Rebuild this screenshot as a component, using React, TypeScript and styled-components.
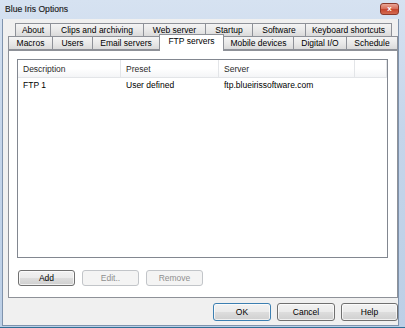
import React from "react";
import styled, { createGlobalStyle } from "styled-components";

const Global = createGlobalStyle`
  html, body { margin: 0; padding: 0; }
  body { font-family: "Liberation Sans", Arial, sans-serif; background: #ffffff; }
`;

const Window = styled.div`
  width: 405px;
  height: 328px;
  box-sizing: border-box;
  display: flex;
  flex-direction: column;
  background: linear-gradient(180deg, #d6e2f1 0%, #c5d5ea 40%, #bccfe6 100%);
  border-bottom: 1px solid #2f6f96;
  font-size: 8.5px;
  color: #000;
`;

const TitleBar = styled.div`
  height: 19px;
  display: flex;
  align-items: flex-start;
  justify-content: space-between;
  padding: 0 6px 0 5px;
  box-sizing: border-box;
`;

const Title = styled.span`
  font-size: 8.6px;
  line-height: 1;
  margin-top: 5px;
  color: #1b1b1b;
  -webkit-text-stroke: 0.15px #1b1b1b;
`;

const CloseButton = styled.div`
  width: 19px;
  height: 12px;
  margin-top: 3px;
  box-sizing: border-box;
  border: 1px solid #8c3a2c;
  border-radius: 3px;
  background: linear-gradient(180deg, #eaa696 0%, #d8705c 45%, #c7472f 55%, #d36a50 100%);
  display: flex;
  align-items: center;
  justify-content: center;
  color: #fff;
  font-size: 8px;
  font-weight: bold;
  line-height: 1;
`;

const Body = styled.div`
  flex: 1;
  margin: 0 6px 1px 2px;
  border: 1px solid #7f93ad;
  border-top: none;
  background: #f0f0f0;
  display: flex;
  flex-direction: column;
  padding-top: 4px;
`;

const TabRow = styled.div<{ $indent: number; $height: number }>`
  display: flex;
  align-items: flex-end;
  padding-left: ${(p) => p.$indent}px;
  height: ${(p) => p.$height}px;
`;

const Tab = styled.div<{ $w: number; $active?: boolean }>`
  width: ${(p) => p.$w}px;
  height: ${(p) => (p.$active ? 17 : 14)}px;
  box-sizing: border-box;
  border: 1px solid #8e9198;
  border-bottom: ${(p) => (p.$active ? "none" : "1px solid #8e9198")};
  margin-left: -1px;
  margin-bottom: ${(p) => (p.$active ? -1 : 0)}px;
  position: relative;
  z-index: ${(p) => (p.$active ? 2 : 0)};
  background: ${(p) =>
    p.$active ? "#ffffff" : "linear-gradient(180deg, #f4f4f4 0%, #e9e9e9 50%, #dadada 100%)"};
  display: flex;
  align-items: ${(p) => (p.$active ? "flex-start" : "center")};
  padding-top: ${(p) => (p.$active ? 2 : 0)}px;
  justify-content: center;
  white-space: nowrap;
  line-height: 1;
`;

const Panel = styled.div`
  margin-left: 5px;
  width: 390px;
  height: 248px;
  box-sizing: border-box;
  border: 1px solid #8e9198;
  background: #ffffff;
  padding: 8px 9px 0 8px;
  display: flex;
  flex-direction: column;
  position: relative;
  z-index: 1;
`;

const ListBox = styled.div`
  height: 199px;
  box-sizing: border-box;
  border: 1px solid #828790;
  background: #fff;
  display: flex;
  flex-direction: column;
`;

const HeaderRow = styled.div`
  display: flex;
  height: 17px;
  background: linear-gradient(180deg, #ffffff 0%, #ffffff 50%, #f4f5f7 100%);
  border-bottom: 1px solid #e3e5e8;
`;

const HeaderCell = styled.div<{ $w: number }>`
  width: ${(p) => p.$w}px;
  flex: ${(p) => (p.$w ? "none" : 1)};
  box-sizing: border-box;
  border-right: 1px solid #e3e5e8;
  padding-left: 5px;
  display: flex;
  align-items: center;
  color: #2a2a2a;
`;

const DataRow = styled.div`
  display: flex;
  height: 14px;
  align-items: center;
`;

const DataCell = styled.div<{ $w: number }>`
  width: ${(p) => p.$w}px;
  box-sizing: border-box;
  padding-left: 5px;
  white-space: nowrap;
`;

const ButtonRow = styled.div<{ $justify?: string; $gap: number }>`
  display: flex;
  justify-content: ${(p) => p.$justify || "flex-start"};
  gap: ${(p) => p.$gap}px;
`;

const PanelButtons = styled(ButtonRow)`
  margin-top: 12px;
  padding-left: 1px;
`;

const DialogButtons = styled(ButtonRow)`
  margin-top: 5px;
  padding-right: 0px;
`;

const Button = styled.div<{ $w: number; $h: number; $disabled?: boolean; $default?: boolean }>`
  width: ${(p) => p.$w}px;
  height: ${(p) => p.$h}px;
  box-sizing: border-box;
  border: 1px solid ${(p) => (p.$disabled ? "#c2c5c9" : p.$default ? "#3c7fb1" : "#707070")};
  border-radius: 3px;
  background: ${(p) =>
    p.$disabled
      ? "#f4f4f4"
      : "linear-gradient(180deg, #f2f2f2 0%, #ebebeb 48%, #dddddd 52%, #cfcfcf 100%)"};
  box-shadow: ${(p) => (p.$disabled ? "none" : "inset 0 0 0 1px rgba(255,255,255,0.7)")};
  color: ${(p) => (p.$disabled ? "#8f8f8f" : "#000")};
  display: flex;
  align-items: center;
  justify-content: center;
  line-height: 1;
`;

const row1 = [
  ["About", 36],
  ["Clips and archiving", 94],
  ["Web server", 63],
  ["Startup", 48],
  ["Software", 54],
  ["Keyboard shortcuts", 87],
] as const;

const row2 = [
  ["Macros", 45, false],
  ["Users", 41, false],
  ["Email servers", 68, false],
  ["FTP servers", 65, true],
  ["Mobile devices", 71, false],
  ["Digital I/O", 54, false],
  ["Schedule", 52, false],
] as const;

const columns = [
  ["Description", 103],
  ["Preset", 98],
  ["Server", 136],
  ["", 0],
] as const;

export default function App() {
  return (
    <>
      <Global />
      <Window>
        <TitleBar>
          <Title>Blue Iris Options</Title>
          <CloseButton>x</CloseButton>
        </TitleBar>
        <Body>
          <TabRow $indent={13} $height={14}>
            {row1.map(([label, w]) => (
              <Tab key={label} $w={w}>
                {label}
              </Tab>
            ))}
          </TabRow>
          <TabRow $indent={6} $height={13}>
            {row2.map(([label, w, active]) => (
              <Tab key={label} $w={w} $active={active}>
                {label}
              </Tab>
            ))}
          </TabRow>
          <Panel>
            <ListBox>
              <HeaderRow>
                {columns.map(([label, w], i) => (
                  <HeaderCell key={i} $w={w}>
                    {label}
                  </HeaderCell>
                ))}
              </HeaderRow>
              <DataRow>
                <DataCell $w={103}>FTP 1</DataCell>
                <DataCell $w={98}>User defined</DataCell>
                <DataCell $w={136}>ftp.blueirissoftware.com</DataCell>
              </DataRow>
            </ListBox>
            <PanelButtons $gap={7}>
              <Button $w={57} $h={16}>Add</Button>
              <Button $w={57} $h={16} $disabled>Edit..</Button>
              <Button $w={57} $h={16} $disabled>Remove</Button>
            </PanelButtons>
          </Panel>
          <DialogButtons $justify="flex-end" $gap={6}>
            <Button $w={58} $h={18} $default>OK</Button>
            <Button $w={58} $h={18}>Cancel</Button>
            <Button $w={57} $h={18}>Help</Button>
          </DialogButtons>
        </Body>
      </Window>
    </>
  );
}
